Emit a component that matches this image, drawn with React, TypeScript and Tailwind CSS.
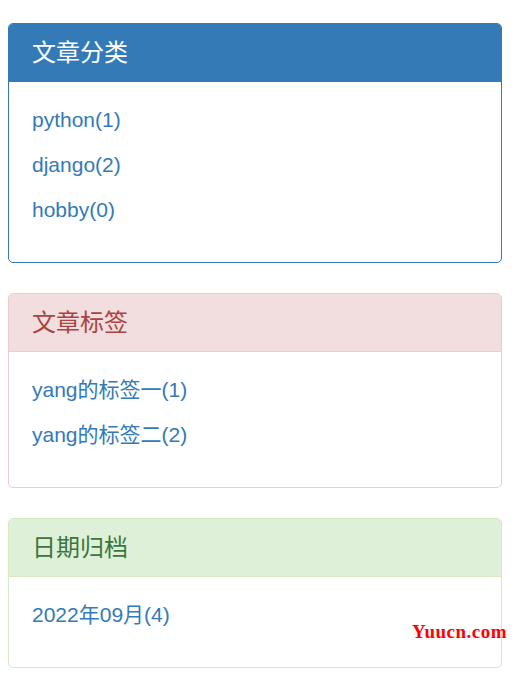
import React from "react";

type Panel = {
  title: string;
  items: string[];
  tone: "primary" | "danger" | "success";
};

const panels: Panel[] = [
  { title: "文章分类", items: ["python(1)", "django(2)", "hobby(0)"], tone: "primary" },
  { title: "文章标签", items: ["yang的标签一(1)", "yang的标签二(2)"], tone: "danger" },
  { title: "日期归档", items: ["2022年09月(4)"], tone: "success" },
];

const tones = {
  primary: {
    box: "border-[#337ab7]",
    head: "bg-[#337ab7] text-white border-[#337ab7]",
  },
  danger: {
    box: "border-[#ebccd1]",
    head: "bg-[#f2dede] text-[#a94442] border-[#ebccd1]",
  },
  success: {
    box: "border-[#d6e9c6]",
    head: "bg-[#dff0d8] text-[#3c763d] border-[#d6e9c6]",
  },
};

function SidePanel({ title, items, tone }: Panel) {
  const t = tones[tone];
  return (
    <div className={`border rounded-[5px] overflow-hidden bg-white ${t.box}`}>
      {/* heading */}
      <div className={`h-[58px] border-b px-[23px] flex items-center text-[24px] ${t.head}`}>
        {title}
      </div>
      {/* body */}
      <ul className="pt-[15px] pb-[30px] px-[23px]">
        {items.map((item) => (
          <li key={item} className="h-[45px] leading-[45px] text-[21px] text-[#337ab7]">
            {item}
          </li>
        ))}
      </ul>
    </div>
  );
}

export default function App() {
  return (
    <div
      className="relative w-[522px] h-[688px] bg-white pt-[23px] pl-[8px] pr-[20px]"
      style={{ fontFamily: '"Liberation Sans", "Noto Sans CJK SC", sans-serif' }}
    >
      <div className="flex flex-col gap-[30px]">
        {panels.map((p) => (
          <SidePanel key={p.title} {...p} />
        ))}
      </div>
      <div className="absolute left-[412px] top-[622px] text-[19px] leading-[20px] font-bold tracking-[0.5px] text-[#ff0000] font-['Liberation_Serif',serif]">
        Yuucn.com
      </div>
    </div>
  );
}
